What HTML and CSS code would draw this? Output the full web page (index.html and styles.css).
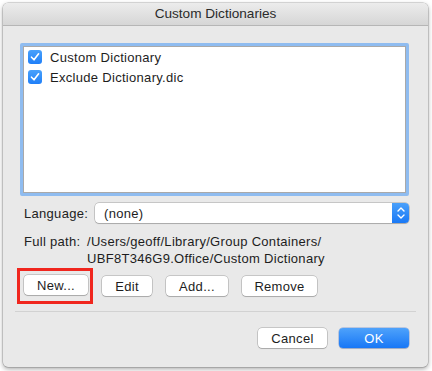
FILE: index.html
```html
<!DOCTYPE html>
<html>
<head>
<meta charset="utf-8">
<link rel="stylesheet" href="styles.css">
</head>
<body>
<div class="window">
  <div class="titlebar">Custom Dictionaries</div>
  <div class="content">
    <div class="listbox">
      <div class="item"><span class="check"><svg width="14" height="14" viewBox="0 0 14 14"><path d="M3.5 7.2 L6 9.8 L10.6 3.8" fill="none" stroke="#fff" stroke-width="1.6" stroke-linecap="round" stroke-linejoin="round"/></svg></span>Custom Dictionary</div>
      <div class="item"><span class="check"><svg width="14" height="14" viewBox="0 0 14 14"><path d="M3.5 7.2 L6 9.8 L10.6 3.8" fill="none" stroke="#fff" stroke-width="1.6" stroke-linecap="round" stroke-linejoin="round"/></svg></span>Exclude Dictionary.dic</div>
    </div>
    <div class="langrow">
      <span class="label">Language:</span>
      <div class="popup">
        <span class="popup-text">(none)</span>
        <span class="stepper"><svg width="10" height="14" viewBox="0 0 10 14"><path d="M2 5 L5 2 L8 5 M2 9 L5 12 L8 9" fill="none" stroke="#fff" stroke-width="1.4" stroke-linecap="round" stroke-linejoin="round"/></svg></span>
      </div>
    </div>
    <div class="pathrow">
      <span class="label">Full path:</span>
      <span class="path">/Users/geoff/Library/Group Containers/<br>UBF8T346G9.Office/Custom Dictionary</span>
    </div>
    <div class="buttons">
      <span class="highlight"><button class="btn w-new">New...</button></span>
      <button class="btn w-edit">Edit</button>
      <button class="btn w-add">Add...</button>
      <button class="btn w-remove">Remove</button>
    </div>
    <div class="separator"></div>
    <div class="footer">
      <button class="btn w-cancel">Cancel</button>
      <button class="btn primary w-ok">OK</button>
    </div>
  </div>
</div>
</body>
</html>
```

FILE: styles.css
```css
* { box-sizing: border-box; }
html, body {
  margin: 0;
  padding: 0;
  background: #ffffff;
}
body {
  width: 432px;
  height: 371px;
  padding: 3px 4px 0 3px;
  font-family: "Liberation Sans", Arial, sans-serif;
  font-size: 13px;
  color: #1d1d1d;
}
.window {
  width: 425px;
  height: 364px;
  background: #e9e9e9;
  border-radius: 5px;
  box-shadow: 0 0 0 0.5px rgba(0,0,0,0.25), 0 2px 5px rgba(0,0,0,0.35);
  overflow: hidden;
  display: flex;
  flex-direction: column;
}
.titlebar {
  height: 23px;
  flex: none;
  background: linear-gradient(#ececec, #d6d6d6);
  border-bottom: 1px solid #b6b6b6;
  text-align: center;
  line-height: 22px;
  font-size: 13.6px;
  color: #2b2b2b;
}
.content {
  padding: 17px 19px 0 17px;
  display: flex;
  flex-direction: column;
}
.listbox {
  height: 153px;
  background: #fff;
  border: 3px solid #8fbcf0;
  box-shadow: inset 0 0 0 1px #a9a9a9;
  border-radius: 2px;
  padding: 1px 5px;
}
.item {
  display: flex;
  align-items: center;
  height: 20px;
  letter-spacing: 0.3px;
}
.check {
  width: 14px;
  height: 14px;
  border-radius: 3px;
  background: linear-gradient(#49a1fb, #1f7ff8);
  margin-right: 8px;
  display: inline-flex;
}
.langrow {
  display: flex;
  align-items: center;
  margin-top: 7px;
  padding-left: 4px;
}
.label {
  letter-spacing: 0.3px;
  color: #222;
}
.langrow .label { width: 71px; }
.popup {
  flex: 1;
  height: 20px;
  background: #fff;
  border-radius: 4px;
  box-shadow: 0 0 0 0.5px rgba(0,0,0,0.3), 0 1px 1px rgba(0,0,0,0.15);
  display: flex;
  align-items: center;
  justify-content: space-between;
}
.popup-text {
  padding-left: 9px;
  letter-spacing: 0.3px;
}
.stepper {
  width: 17px;
  height: 20px;
  background: linear-gradient(#4aa0fa, #1a79f6);
  border-radius: 0 4px 4px 0;
  display: flex;
  align-items: center;
  justify-content: center;
}
.pathrow {
  display: flex;
  margin-top: 10px;
  padding-left: 4px;
  line-height: 17px;
}
.pathrow .label { width: 63px; }
.path { letter-spacing: 0.3px; }
.buttons {
  display: flex;
  align-items: center;
  margin-top: 1px;
  gap: 14px;
}
.highlight {
  display: inline-flex;
  padding: 4px 2px 6px 4px;
  border: 3px solid #f0261e;
  margin-left: -3px;
  margin-right: -5px;
}
.btn {
  height: 20px;
  background: #fff;
  border: none;
  border-radius: 4px;
  box-shadow: 0 0 0 0.5px rgba(0,0,0,0.3), 0 1px 1px rgba(0,0,0,0.15);
  font-family: "Liberation Sans", Arial, sans-serif;
  font-size: 13px;
  letter-spacing: 0.3px;
  color: #1d1d1d;
  padding: 0;
  text-align: center;
}
.w-new { width: 64px; }
.w-edit { width: 50px; }
.w-add { width: 62px; }
.w-remove { width: 75px; }
.separator {
  height: 1px;
  background: #d2d2d2;
  margin-top: 7px;
  margin-left: -5px;
  margin-right: -7px;
}
.footer {
  display: flex;
  justify-content: flex-end;
  gap: 12px;
  margin-top: 16px;
}
.w-cancel { width: 69px; }
.w-ok { width: 70px; }
.primary {
  background: linear-gradient(#4ea2fb, #1877f6);
  color: #fff;
  box-shadow: 0 0 0 0.5px rgba(0,60,180,0.4), 0 1px 1px rgba(0,0,0,0.15);
}
```
